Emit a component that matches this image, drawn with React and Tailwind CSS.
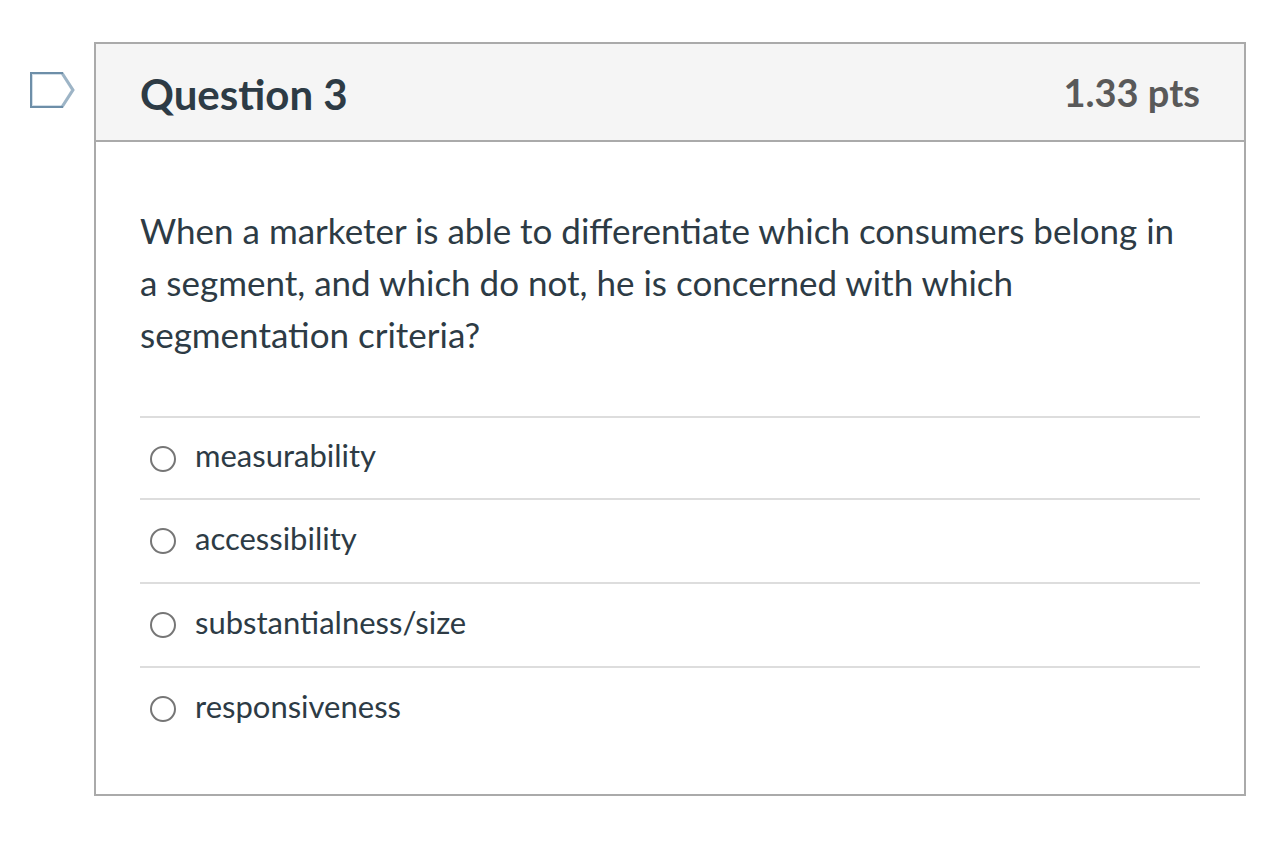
import React, { useState } from "react";

const ANSWERS = ["measurability", "accessibility", "substantialness/size", "responsiveness"];

function FlagIcon() {
  return (
    <svg width="46" height="38" viewBox="0 0 46 38" fill="none" aria-hidden="true">
      <path d="M3 3H33L43 19L33 35H3Z" stroke="#d3dfe8" strokeWidth="2" />
      <path d="M33 2L44 19L33 36" stroke="#9db4c6" strokeWidth="3" />
      <path d="M34 2H2V36H34" stroke="#6d8ea8" strokeWidth="2" />
    </svg>
  );
}

export default function App() {
  const [selected, setSelected] = useState("");

  return (
    <main className="flex min-h-screen items-start bg-white pt-[42px] pr-[42px] pb-14 pl-[29px] font-['Lato',sans-serif] text-[#2d3b45]">
      <button type="button" aria-label="Flag question" className="mt-[29px] mr-[19px] shrink-0">
        <FlagIcon />
      </button>

      <section className="min-w-0 flex-1 border-2 border-[#aaaaaa]">
        <header className="flex items-center justify-between border-b-2 border-[#aaaaaa] bg-[#f5f5f5] px-11 pt-5 pb-4">
          <h1 className="text-[42px] leading-[60px] font-bold">Question 3</h1>
          <span className="pb-1 text-[38px] leading-[56px] font-bold text-[#595959]">1.33 pts</span>
        </header>

        <div className="px-11 pt-[62px] pb-11">
          <p id="question" className="text-[35px] leading-[52px]">
            When a marketer is able to differentiate which consumers belong in a segment, and which do
            not, he is concerned with which segmentation criteria?
          </p>

          <div role="radiogroup" aria-labelledby="question" className="mt-14">
            {ANSWERS.map((answer) => (
              <label
                key={answer}
                className="flex h-[84px] items-start border-t-2 border-[#dddddd] pl-[10px] first:h-[82px]"
              >
                <input
                  type="radio"
                  name="answer"
                  value={answer}
                  checked={selected === answer}
                  onChange={() => setSelected(answer)}
                  className="mt-7 size-[26px] shrink-0 appearance-none rounded-full border-2 border-[#767676] bg-white checked:border-8"
                />
                <span className="ml-[19px] self-center pb-1.5 text-[31px] leading-[40px]">{answer}</span>
              </label>
            ))}
          </div>
        </div>
      </section>
    </main>
  );
}
